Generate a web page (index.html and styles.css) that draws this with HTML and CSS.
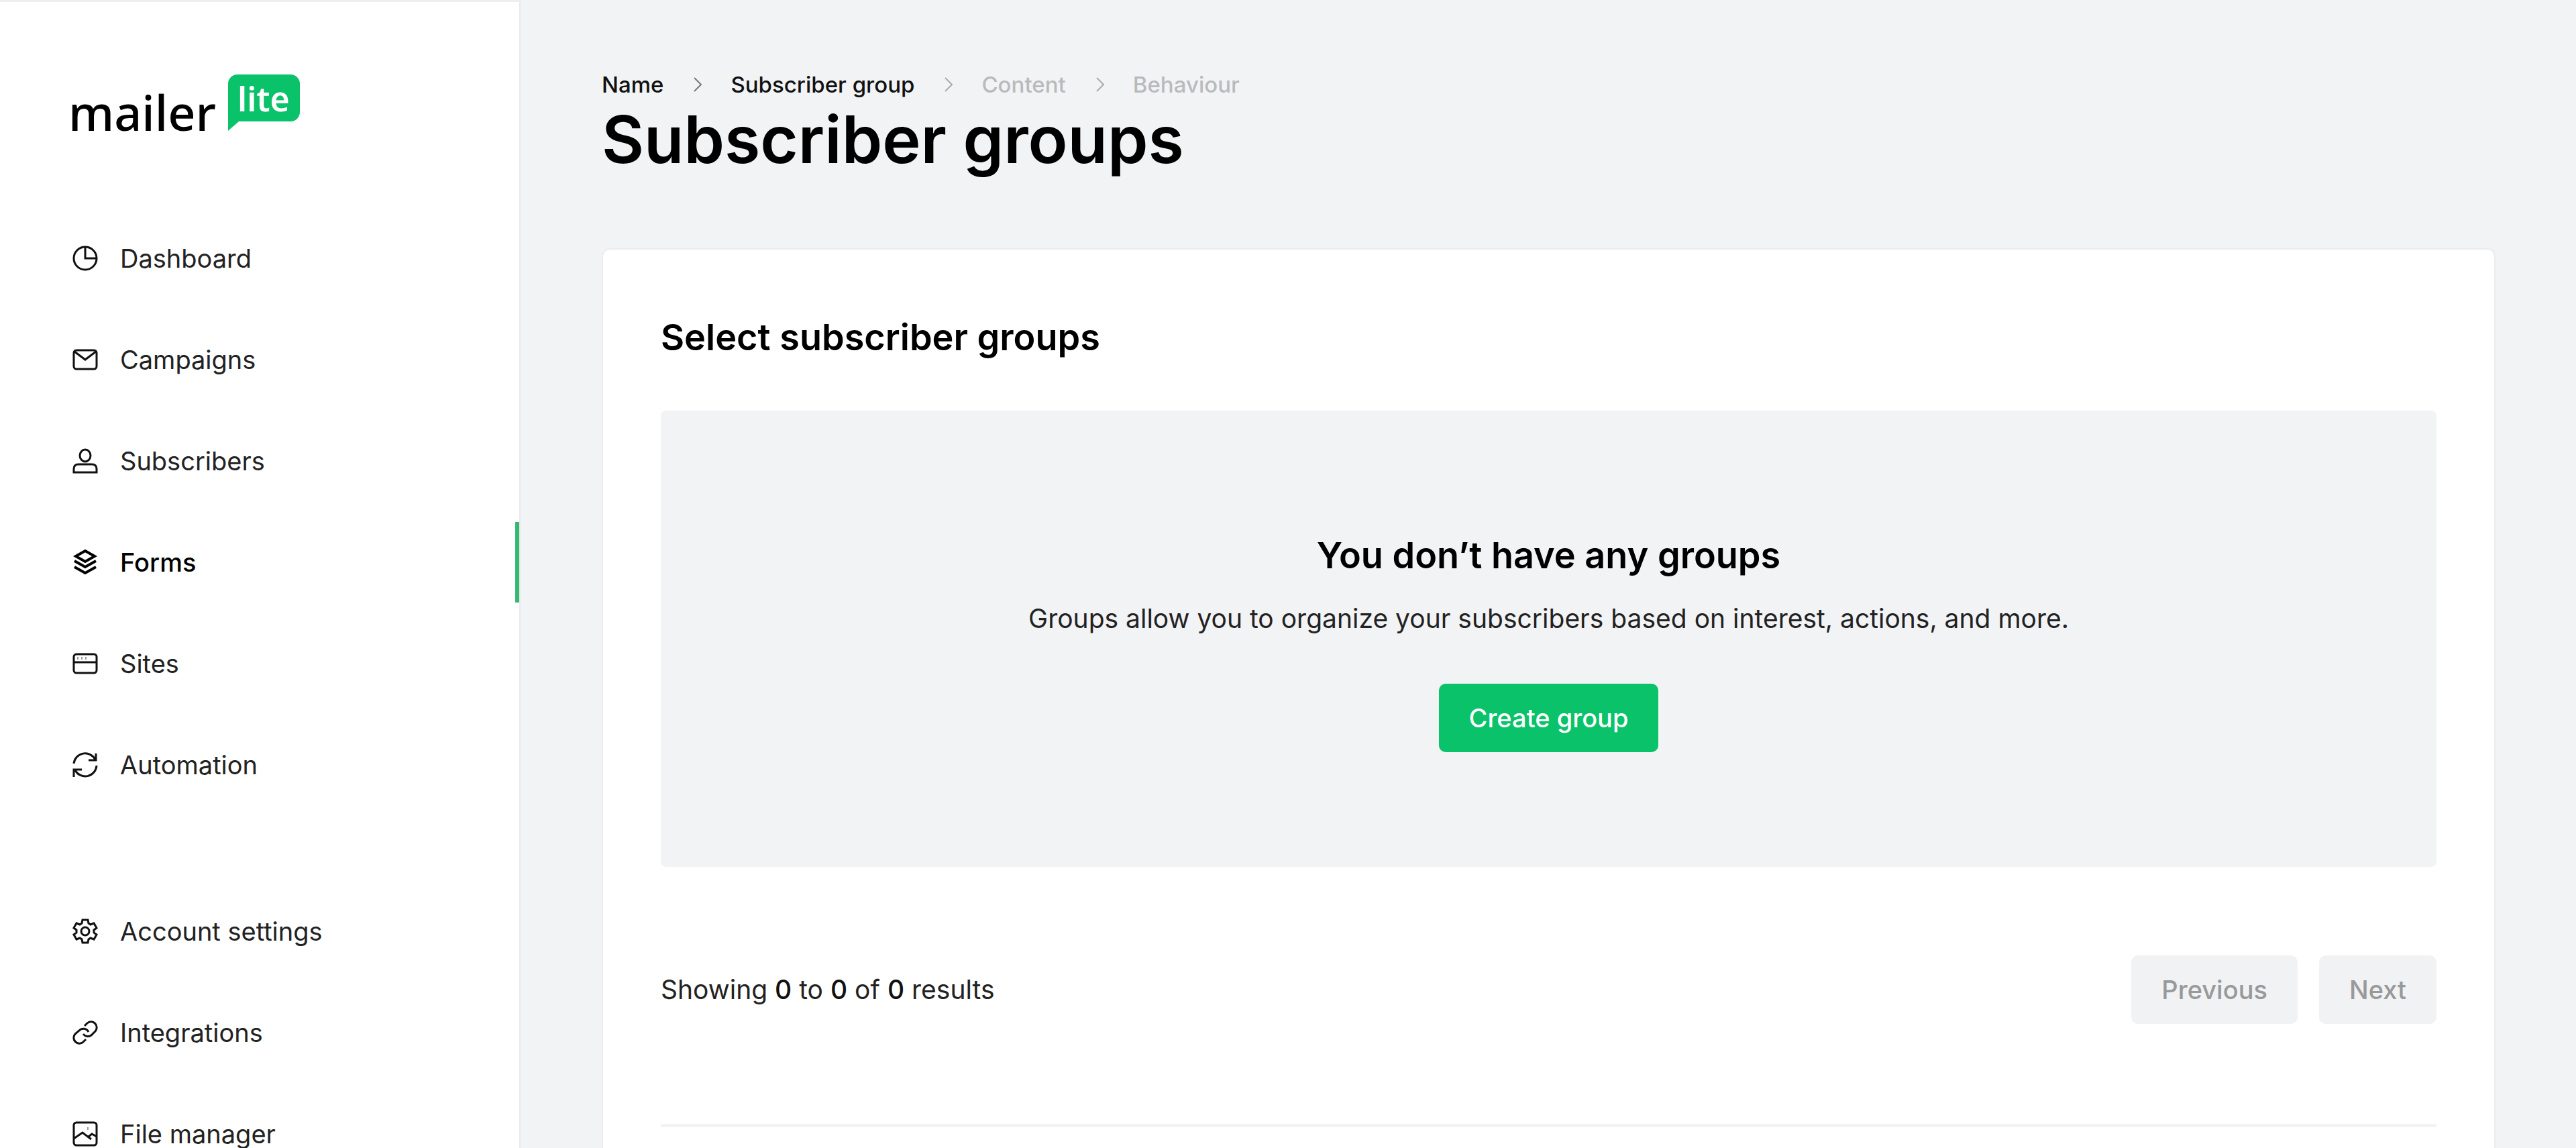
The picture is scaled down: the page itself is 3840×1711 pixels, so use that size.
FILE: index.html
```html
<!DOCTYPE html>
<html lang="en">
<head>
<meta charset="utf-8">
<title>Subscriber groups</title>
<link rel="stylesheet" href="styles.css">
</head>
<body>
<div class="app">
  <aside class="sidebar">
    <a class="logo" href="#" aria-label="mailerlite">
      <svg class="logo-art" viewBox="0 0 342 90">
        <text class="logo-word" x="-6" y="85">mailer</text>
        <path class="logo-bubble" d="M246 1h79a14 14 0 0 1 14 14v42a14 14 0 0 1-14 14h-77l-16 14V15a14 14 0 0 1 14-14z"/>
        <text class="logo-tag" x="246" y="56">lite</text>
      </svg>
    </a>
    <nav class="nav">
      <ul class="nav-list">
        <li><a class="nav-item" href="#"><svg class="icon" viewBox="0 0 38 38"><circle cx="19" cy="19" r="17"/><path d="M19 2v17h17"/></svg>Dashboard</a></li>
        <li><a class="nav-item" href="#"><svg class="icon" viewBox="0 0 38 38"><rect x="2" y="5" width="34" height="28" rx="4"/><path d="M3 7l16 12L35 7"/></svg>Campaigns</a></li>
        <li><a class="nav-item" href="#"><svg class="icon" viewBox="0 0 38 38"><ellipse cx="19" cy="11" rx="8" ry="9"/><path d="M2 36v-5q0-7 7-7h20q7 0 7 7v5z"/></svg>Subscribers</a></li>
        <li><a class="nav-item nav-item-active" href="#" aria-current="page"><svg class="icon icon-bold" viewBox="0 0 38 38"><path d="M19 2l14 8-14 8-14-8z"/><path d="M3 17l16 9 16-9M3 26l16 9 16-9"/></svg>Forms</a></li>
        <li><a class="nav-item" href="#"><svg class="icon" viewBox="0 0 38 38"><rect x="2" y="5" width="34" height="28" rx="4"/><path d="M2 17h34"/><path class="icon-fine" d="M8 9v4M14 9v4M20 9v4"/></svg>Sites</a></li>
        <li><a class="nav-item" href="#"><svg class="icon" viewBox="0 0 38 38"><path d="M2 17A17 17 0 0 1 34 11M35 2v10H24M36 20A17 17 0 0 1 4 27M2 37V26h12"/></svg>Automation</a></li>
      </ul>
      <ul class="nav-list">
        <li><a class="nav-item" href="#"><svg class="icon" viewBox="0 0 38 38"><circle cx="19" cy="19" r="6"/><path d="M15 2h8l1 5 3 2 5-2 4 7-4 3v4l4 3-4 7-5-2-3 2-1 5h-8l-1-5-3-2-5 2-4-7 4-3v-4l-4-3 4-7 5 2 3-2z"/></svg>Account settings</a></li>
        <li><a class="nav-item" href="#"><svg class="icon" viewBox="0 0 38 38"><path d="M18 9l4-4a8.500 8.500 0 0 1 12 12l-6 6a8.500 8.500 0 0 1-12-2"/><path d="M20 29l-4 4A8.500 8.500 0 0 1 4 21l6-5a8.500 8.500 0 0 1 14 2"/></svg>Integrations</a></li>
        <li><a class="nav-item" href="#"><svg class="icon" viewBox="0 0 38 38"><rect x="2" y="2" width="34" height="34" rx="4"/><path d="M2 26l13-9 13 10M24 23l5-4 7 4"/><path class="icon-fine" d="M23 9v4"/></svg>File manager</a></li>
      </ul>
    </nav>
  </aside>
  <main class="main">
    <nav aria-label="Progress">
      <ol class="steps">
        <li><a class="step" href="#">Name</a></li>
        <li class="step-next"><svg class="chevron" viewBox="0 0 14 24"><path d="M2 2l10 10L2 22"/></svg><a class="step" href="#" aria-current="step">Subscriber group</a></li>
        <li class="step-next step-off"><svg class="chevron" viewBox="0 0 14 24"><path d="M2 2l10 10L2 22"/></svg><span class="step">Content</span></li>
        <li class="step-next step-off"><svg class="chevron" viewBox="0 0 14 24"><path d="M2 2l10 10L2 22"/></svg><span class="step">Behaviour</span></li>
      </ol>
    </nav>
    <h1 class="page-title">Subscriber groups</h1>
    <section class="card">
      <h2 class="heading">Select subscriber groups</h2>
      <div class="empty">
        <h3 class="heading">You don’t have any groups</h3>
        <p class="empty-text">Groups allow you to organize your subscribers based on interest, actions, and more.</p>
        <button class="button button-primary" type="button">Create group</button>
      </div>
      <div class="pager">
        <p class="pager-text">Showing <b>0</b> to <b>0</b> of <b>0</b> results</p>
        <div class="pager-buttons">
          <button class="button" type="button" disabled>Previous</button>
          <button class="button" type="button" disabled>Next</button>
        </div>
      </div>
      <hr class="rule">
    </section>
  </main>
</div>
</body>
</html>
```
FILE: styles.css
```css
* { box-sizing: border-box; margin: 0; padding: 0; }

body {
  background: #f2f3f5;
  color: #222;
  font: 400 38px/48px Inter, "Liberation Sans", sans-serif;
  font-optical-sizing: none;
}

a { color: inherit; text-decoration: none; }
ul, ol { list-style: none; }

.app { display: flex; min-height: 100vh; }

.sidebar {
  flex: 0 0 776px;
  background: #fff;
  border-top: 3px solid #eee;
  border-right: 2px solid #e9eaec;
  padding-top: 107px;
}

.logo { display: block; margin-left: 108px; }
.logo-art { display: block; width: 342px; height: 90px; overflow: visible; }
.logo-word { font: 500 72px "Noto Sans", sans-serif; fill: #000; }
.logo-tag { font: 600 50px "Noto Sans", sans-serif; fill: #fff; }
.logo-bubble { fill: #09c269; }

.nav { display: grid; gap: 128px; padding: 125px 0 40px; }
.nav-list { display: grid; gap: 31px; }

.nav-item {
  display: flex;
  align-items: center;
  gap: 33px;
  height: 120px;
  padding-left: 108px;
  border-right: 6px solid transparent;
}
.nav-item-active { border-right-color: #36b871; color: #000; font-weight: 500; }

.icon { width: 38px; height: 38px; fill: none; stroke: #111; stroke-width: 3; }
.icon-bold { stroke: #000; stroke-width: 4; }
.icon-fine { stroke: #999; stroke-width: 2; }

.main { flex: 1; padding: 102px 120px 0 121px; }

.steps { display: flex; gap: 44px; font-size: 33px; font-weight: 500; color: #111; }
.step-next { display: flex; align-items: center; gap: 42px; }
.step-off { color: #b9babc; }
.chevron { width: 14px; height: 24px; fill: none; stroke: #777; stroke-width: 2; }
.step-off .chevron { stroke: #aaa; }

.page-title { font-size: 97px; line-height: 116px; font-weight: 600; color: #000; }

.card {
  margin-top: 104px;
  padding: 98px 86px;
  background: #fff;
  border: 2px solid #ebecee;
  border-radius: 12px;
}

.heading { font-size: 54px; line-height: 66px; font-weight: 600; color: #000; }

.empty {
  display: flex;
  flex-direction: column;
  align-items: center;
  margin-top: 76px;
  padding: 183px 48px 171px;
  background: #f2f3f5;
  border-radius: 8px;
  text-align: center;
}
.empty-text { margin: 37px 0 73px; }
.empty-text, .pager-text { font-size: 39px; }

.button {
  height: 102px;
  padding: 0 45px;
  border: 0;
  border-radius: 10px;
  background: #f1f2f4;
  color: #999;
  font: inherit;
  font-weight: 500;
}
.button-primary { background: #09c269; color: #fff; }

.pager { display: flex; align-items: center; justify-content: space-between; margin-top: 132px; }
.pager-text b { font-weight: 500; color: #111; }
.pager-buttons { display: flex; gap: 32px; }

.rule { margin-top: 149px; border: 0; border-top: 5px solid #f3f3f4; }
```
